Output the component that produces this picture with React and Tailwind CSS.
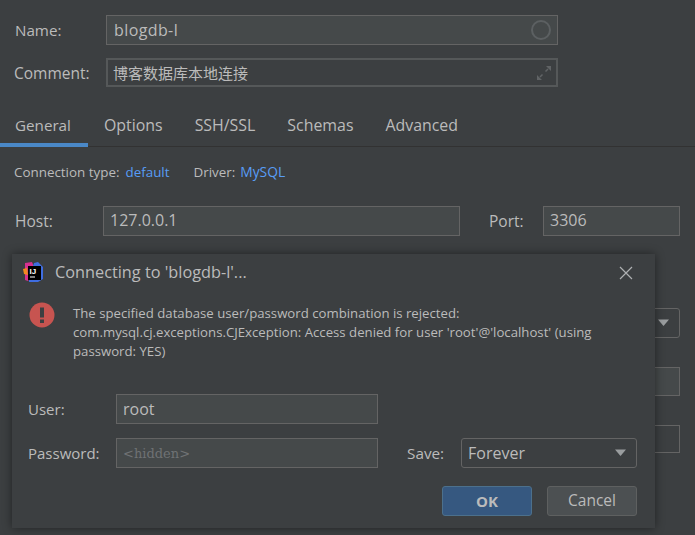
const fieldCls = 'h-[30px] bg-[#45494a] border border-[#646464] flex items-center px-[6px] text-[16px] text-[#bbbbbb]'

function Chevron() {
  return (
    <svg width="16" height="10" viewBox="0 0 16 10" className="shrink-0">
      <path d="M1 1.5h11L6.5 8z" fill="#9a9d9f" />
    </svg>
  )
}

function IdeaLogo() {
  return (
    <svg width="21" height="21" viewBox="0 0 21 21" className="shrink-0">
      <path d="M2 1 L9 0 L11 5 L5 19 L2 18z" fill="#d5308f" />
      <path d="M0 7 L4 6 L5 13 L1 12z" fill="#f28a1f" />
      <path d="M11 1 L15 0 L20 5 L20 17 L15 20 L6 20 L6 16z" fill="#3f6de0" />
      <rect x="5" y="4" width="13" height="14" fill="#000000" />
      <text x="6.5" y="11.5" fontSize="8" fontWeight="700" fill="#ffffff" fontFamily="'Liberation Sans', sans-serif">IJ</text>
      <rect x="7" y="14.5" width="5" height="1" fill="#ffffff" />
    </svg>
  )
}

function ConnectDialog() {
  return (
    <div className="absolute left-[12px] top-[254px] w-[643px] h-[274px] bg-[#3c3f41] shadow-[0_0_9px_rgba(0,0,0,0.45)] flex flex-col">
      <div className="flex items-center h-[37px] pl-[11px] pr-[22px]">
        <IdeaLogo />
        <span className="ml-[11px] text-[16.3px] text-[#bbbbbb] flex-1">Connecting to 'blogdb-l'...</span>
        <svg width="14" height="14" viewBox="0 0 14 14">
          <path d="M1 1l12 12M13 1L1 13" stroke="#aeb0b2" strokeWidth="1.2" />
        </svg>
      </div>
      <div className="flex mt-[11px] pl-[17px] pr-[20px]">
        <svg width="26" height="26" viewBox="0 0 26 26" className="shrink-0">
          <circle cx="13" cy="13" r="12.5" fill="#c75450" />
          <rect x="11" y="5.5" width="4" height="10" fill="#3c3f41" />
          <rect x="11" y="17.5" width="4" height="3.5" fill="#3c3f41" />
        </svg>
        <p className="ml-[18px] mt-[2px] text-[13.2px] leading-[19px] text-[#bbbbbb]">
          The specified database user/password combination is rejected:
          <br />
          com.mysql.cj.exceptions.CJException: Access denied for user 'root'@'localhost' (using
          <br />
          password: YES)
        </p>
      </div>
      <div className="flex items-center mt-[33px] pl-[16px]">
        <span className="w-[88px] text-[15px] text-[#bbbbbb]">User:</span>
        <div className={fieldCls + ' w-[262px]'}>root</div>
      </div>
      <div className="flex items-center mt-[14px] pl-[16px]">
        <span className="w-[88px] text-[15px] text-[#bbbbbb]">Password:</span>
        <div className={fieldCls + " w-[262px] pt-[2px] !text-[13px] !text-[#6f7274] font-['DejaVu_Serif',serif]"}>&lt;hidden&gt;</div>
        <span className="ml-[29px] w-[54px] text-[15.3px] text-[#bbbbbb]">Save:</span>
        <div className="h-[30px] w-[176px] bg-[#3c3f41] border border-[#646464] rounded-[3px] flex items-center justify-between pl-[6px] pr-[6px] text-[16px] text-[#bbbbbb]">
          Forever
          <Chevron />
        </div>
      </div>
      <div className="flex justify-end gap-[15px] mt-[18px] pr-[18px]">
        <button className="h-[30px] w-[90px] rounded-[3px] bg-[#365880] border border-[#4c708c] text-[15px] font-bold text-[#bbbbbb]">OK</button>
        <button className="h-[30px] w-[90px] rounded-[3px] bg-[#4c5052] border border-[#5e6060] text-[15.5px] text-[#bbbbbb]">Cancel</button>
      </div>
    </div>
  )
}

export default function App() {
  const tabs = ['Options', 'SSH/SSL', 'Schemas', 'Advanced']
  return (
    <div className="relative w-[695px] h-[535px] overflow-hidden bg-[#3c3f41] text-[#bbbbbb] font-['Open_Sans','Noto_Sans_CJK_SC',sans-serif]">
      <div className="pt-[15px]">
        <div className="flex items-center pl-[15px] pr-[137px]">
          <span className="w-[91px] text-[15.2px]">Name:</span>
          <div className={fieldCls + ' flex-1 justify-between pl-[7px] pr-[6px]'}>
            <span className="tracking-[0.4px]">blogdb-l</span>
            <span className="w-[20px] h-[20px] rounded-full border-2 border-[#5c6062]" />
          </div>
        </div>
        <div className="flex items-center mt-[13px] pl-[14px] pr-[137px]">
          <span className="w-[92px] pt-[2px] text-[15.5px]">Comment:</span>
          <div className="h-[29px] flex-1 border-2 border-[#555859] flex items-center justify-between pl-[5px] pr-[4px] pt-[1px] text-[15px] text-[#bbbbbb]">
            博客数据库本地连接
            <svg width="16" height="16" viewBox="0 0 16 16">
              <path d="M10 1h5v5zM1 15v-5l5 5z" fill="#606365" />
              <path d="M12 4L9.5 6.5M4 12l2.5-2.5" stroke="#606365" strokeWidth="1.5" />
            </svg>
          </div>
        </div>
        <div className="flex h-[42px] mt-[18px] border-b border-[#323232] text-[15.9px]">
          <div className="w-[88px] pl-[15px] pt-[9px] border-b-[4px] border-[#4a88c7] -mb-[1px] text-[15.2px]">General</div>
          {tabs.map((t) => (
            <div key={t} className="pt-[9px] pl-[16px] pr-[16px]">{t}</div>
          ))}
        </div>
        <div className="flex items-center h-[19px] mt-[16px] pl-[14px] text-[13.4px]">
          <span>Connection type:</span>
          <span className="ml-[6px] text-[#589df6]">default</span>
          <span className="ml-[24px]">Driver:</span>
          <span className="ml-[5px] text-[13.8px] text-[#589df6]">MySQL</span>
        </div>
        <div className="flex items-center mt-[24px] pl-[15px]">
          <span className="w-[88px] pt-[2px] text-[15.5px]">Host:</span>
          <div className={fieldCls + ' w-[357px] pb-[2px]'}>127.0.0.1</div>
          <span className="ml-[29px] w-[54px] pt-[2px] text-[15.5px]">Port:</span>
          <div className={fieldCls + ' w-[137px] pb-[2px]'}>3306</div>
        </div>
        {/* rest of the form, mostly covered by the dialog */}
        <div className="flex flex-col items-end pr-[15px] mt-[72px]">
          <div className="h-[30px] w-[60px] border border-[#646464] rounded-[3px] flex items-center justify-end pr-[6px]">
            <Chevron />
          </div>
          <div className="h-[29px] w-[60px] mt-[29px] bg-[#45494a] border border-[#646464]" />
          <div className="h-[28px] w-[60px] mt-[29px] border border-[#646464]" />
        </div>
      </div>
      <ConnectDialog />
    </div>
  )
}
